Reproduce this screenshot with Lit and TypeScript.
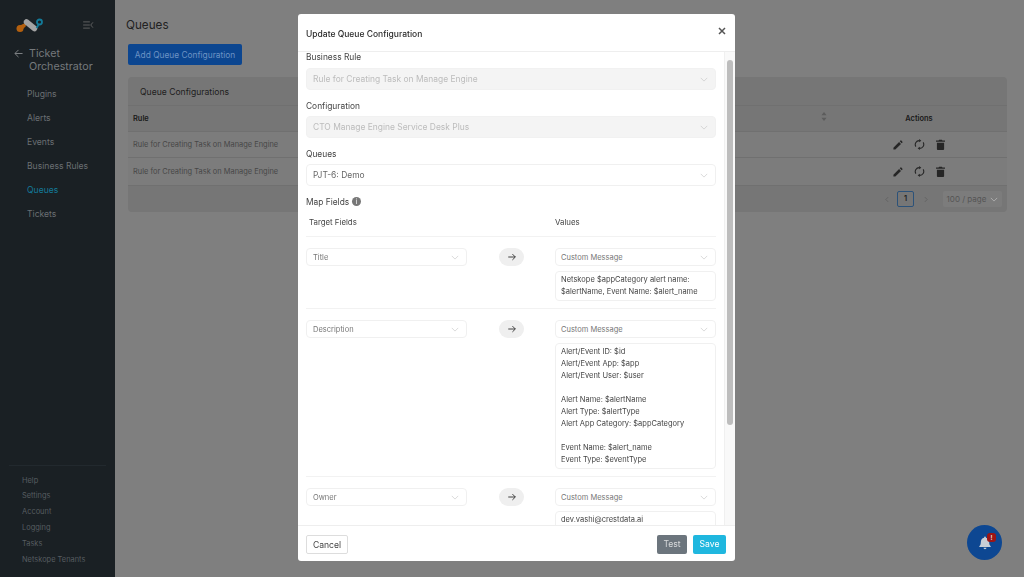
import { LitElement, css, html, svg } from 'lit'
import { customElement } from 'lit/decorators.js'

const chevron = html`<svg class="chev" viewBox="0 0 10 6" width="8" height="5"><path d="M1 1l4 4 4-4" fill="none" stroke="currentColor" stroke-width="0.8"/></svg>`

const pencil = svg`<path d="M.5 11.500V9.200L7.300 2.400l2.300 2.300-6.800 6.800zM8.100 1.600l.9-.9a.7.7 0 0 1 1 0l1.300 1.300a.7.7 0 0 1 0 1l-.9.900z"/>`
const sync = svg`<g fill="none" stroke="currentColor" stroke-width="1.200"><path d="M2 8.300A4.300 4.300 0 0 1 6 1.800"/><path d="M10 3.700A4.300 4.300 0 0 1 6 10.200"/></g><path d="M5.600 0v3.600L8 1.800zM6.400 12V8.400L4 10.200z"/>`
const trash = svg`<path d="M1 4h8v7a1 1 0 0 1-1 1H2a1 1 0 0 1-1-1zM0 1.500h2.800L3.500.6h3l.7.900H10V3H0z"/>`

@customElement('app-root')
export class AppRoot extends LitElement {
  static styles = css`
    :host {
      display: grid;
      grid-template-columns: 115px 1fr;
      height: 100vh;
      overflow: hidden;
      font-family: Inter, 'Liberation Sans', sans-serif;
      background: #7f7f7f;
      color: #333;
    }
    .side {
      background: #1a2024;
      display: flex;
      flex-direction: column;
      color: #6a6f73;
      font-size: 8.600px;
    }
    .brand {
      display: flex;
      align-items: center;
      justify-content: space-between;
      padding: 16px 21px 0 16px;
      height: 17px;
    }
    .back {
      display: flex;
      gap: 6px;
      margin: 14px 0 0 14px;
      font-size: 10.700px;
      line-height: 13px;
      color: #75797c;
    }
    .back svg { margin-top: 2px; }
    .nav { display: flex; flex-direction: column; margin: 9px 0 0 27px; }
    .nav div { height: 24px; line-height: 24px; }
    .nav .on { color: #137a99; }
    .foot {
      margin: auto 9px 9px;
      padding: 7px 0 0 13px;
      border-top: 1px solid #22292e;
      font-size: 7.450px;
      color: #565c60;
      line-height: 15.900px;
    }
    .main { padding: 17px 17px 0 11px; min-width: 0; color: #222; }
    .main h1 { font-size: 11.700px; font-weight: 400; margin: 0; line-height: 16px; }
    .add {
      margin: 11px 0 0 2px;
      width: 114px;
      height: 21px;
      box-sizing: border-box;
      background: #0c4690;
      border-radius: 2px;
      color: #6d93c4;
      font-size: 8.350px;
      line-height: 22px;
      text-align: center;
    }
    .card {
      margin: 12px 0 0 2px;
      height: 135px;
      background: #767676;
      border-radius: 4px;
      font-size: 7.450px;
    }
    .card-head { height: 28px; line-height: 30px; padding-left: 12px; font-size: 8.600px; color: #1d1d1d; }
    .tr {
      display: grid;
      grid-template-columns: 1fr 176px;
      align-items: center;
      padding-left: 5px;
      border-top: 1px solid #707070;
      background: #7c7c7c;
      height: 28px;
      box-sizing: border-box;
      color: #474747;
    }
    .tr.th { background: #767676; height: 26px; color: #191919; font-weight: 600; }
    .th + .tr { height: 26px; }
    .th .act { text-align: center; }
    .sort { position: relative; }
    .sort svg { position: absolute; right: 4px; top: -2px; }
    .icons { display: flex; gap: 11px; align-items: center; padding-left: 62px; color: #262626; }
    .icons svg { fill: currentColor; flex: none; }
    .pager {
      display: flex;
      justify-content: flex-end;
      align-items: center;
      height: 27px;
      box-sizing: border-box;
      padding-right: 5px;
      color: #555;
      border-top: 1px solid #707070;
    }
    .pager > svg { margin: 0 4px 0 3px; flex: none; }
    .pager .page {
      width: 17px;
      height: 16px;
      margin: 0 7px 0 4px;
      box-sizing: border-box;
      border: 1px solid #2c5279;
      border-radius: 2px;
      text-align: center;
      line-height: 14px;
      font-weight: 600;
      color: #222;
    }
    .pager .size {
      margin-left: 11px;
      width: 59px;
      height: 16px;
      box-sizing: border-box;
      background: #7c7c7c;
      border-radius: 2px;
      display: flex;
      align-items: center;
      justify-content: center;
      gap: 4px;
      font-size: 8px;
    }
    .modal {
      position: fixed;
      left: 298px;
      top: 14px;
      width: 437px;
      height: 547px;
      background: #fff;
      border-radius: 3px;
      display: flex;
      flex-direction: column;
      overflow: hidden;
    }
    .modal-head {
      height: 38px;
      flex: none;
      box-sizing: border-box;
      border-bottom: 1px solid #eee;
      display: flex;
      align-items: center;
      justify-content: space-between;
      padding: 3px 9px 0 8px;
      font-size: 8.500px;
      color: #2b2b2b;
      font-weight: 500;
    }
    .modal-head svg { margin-top: -7px; }
    .body {
      flex: 1;
      min-height: 0;
      overflow: hidden;
      padding: 0 19px 0 8px;
      color: #555;
    }
    .label { font-size: 8.400px; line-height: 12px; color: #444; padding-top: 1px; }
    .block { margin-bottom: 9px; }
    .block:first-child { margin-top: -2px; }
    .block > .label { margin: 0 0 4px; }
    .block:first-child > .label { margin-bottom: 5px; }
    .sel {
      display: flex;
      align-items: center;
      justify-content: space-between;
      height: 22px;
      box-sizing: border-box;
      padding: 0 7px 0 6px;
      border: 1px solid #f0f0f0;
      border-radius: 4px;
      background: #fff;
      color: #666;
      font-size: 8.450px;
    }
    .sel.dis { background: #f4f4f4; color: #bcbcbc; border-color: #f1f1f1; }
    .chev { color: #c6c6c6; flex: none; }
    .sel.small { height: 18px; font-size: 7.500px; color: #777; }
    .row > div:last-child .sel { padding-left: 5px; }
    .map-head {
      display: grid;
      grid-template-columns: 246px 1fr;
      padding: 9px 0 9px 3px;
      border-bottom: 1px solid #f2f2f2;
      font-size: 7.850px;
      color: #444;
    }
    .row {
      display: grid;
      grid-template-columns: 161px 88px 161px;
      padding: 11px 0 7px;
      border-bottom: 1px solid #f2f2f2;
      align-items: start;
    }
    .go {
      width: 25px;
      height: 18px;
      margin-left: 32px;
      background: #efefef;
      border-radius: 9px;
      display: flex;
      align-items: center;
      justify-content: center;
    }
    .area {
      margin-top: 5px;
      padding: 2px 5px;
      border: 1px solid #f0f0f0;
      border-radius: 4px;
      font-size: 7.500px;
      line-height: 12px;
      color: #444;
      white-space: pre-wrap;
      box-sizing: border-box;
    }
    .info {
      display: inline-block;
      width: 9px;
      height: 9px;
      border-radius: 50%;
      background: #777;
      color: #fff;
      font-size: 7px;
      line-height: 9px;
      text-align: center;
      margin-left: 3px;
      vertical-align: 1px;
    }
    .track {
      position: absolute;
      right: 0;
      top: 38px;
      bottom: 36px;
      width: 11px;
      background: #f9f9f9;
      border-left: 1px solid #f0f0f0;
      box-sizing: border-box;
    }
    .thumb {
      position: absolute;
      left: 2px;
      top: 8px;
      width: 6px;
      height: 365px;
      border-radius: 3px;
      background: #bdbdbd;
    }
    .modal-foot {
      height: 36px;
      flex: none;
      box-sizing: border-box;
      border-top: 1px solid #eee;
      display: flex;
      align-items: center;
      gap: 6px;
      padding: 1px 9px 0 8px;
      font-size: 8.600px;
    }
    .btn {
      height: 19px;
      line-height: 18px;
      box-sizing: border-box;
      border-radius: 2px;
      text-align: center;
    }
    .cancel { border: 1px solid #ddd; color: #444; width: 42px; margin-right: auto; }
    .test { background: #6c757d; color: #d8dadc; width: 30px; }
    .save { background: #1fb7df; color: #fff; width: 33px; }
    .fab {
      position: fixed;
      left: 967px;
      top: 525px;
      width: 35px;
      height: 35px;
      border-radius: 50%;
      background: #0d4792;
      display: flex;
      align-items: center;
      justify-content: center;
    }
    .badge {
      position: absolute;
      left: 20px;
      top: 8px;
      width: 9px;
      height: 9px;
      border-radius: 3px;
      background: #9c1515;
      color: #ddd;
      font-size: 6px;
      font-weight: 700;
      line-height: 9px;
      text-align: center;
    }
  `

  tableRow() {
    return html`<div class="tr">
      <div>Rule for Creating Task on Manage Engine</div>
      <div class="icons">
        <svg viewBox="0 0 12 12" width="10" height="10">${pencil}</svg>
        <svg viewBox="0 0 12 12" width="11" height="11">${sync}</svg>
        <svg viewBox="0 0 10 12" width="9" height="11">${trash}</svg>
      </div>
    </div>`
  }

  mapRow(field: string, value: string, height: number) {
    return html`<div class="row">
      <div class="sel small"><span>${field}</span>${chevron}</div>
      <div class="go">
        <svg viewBox="0 0 12 12" width="10" height="10"><path d="M1.500 6h8.500M6.500 2.500L10 6l-3.500 3.500" fill="none" stroke="#333" stroke-width="1.100"/></svg>
      </div>
      <div>
        <div class="sel small"><span>Custom Message</span>${chevron}</div>
        <div class="area" style="height:${height}px">${value}</div>
      </div>
    </div>`
  }

  render() {
    return html`
      <aside class="side">
        <div class="brand">
          <svg viewBox="0 0 28 16" width="28" height="16">
            <circle cx="4" cy="11.500" r="3.500" fill="#b4600f"/>
            <path d="M3 9L9 6L10 9L6 13z" fill="#b4600f"/>
            <path d="M10.500 5L18.500 11.500" stroke="#a3a3a3" stroke-width="5.500" stroke-linecap="round"/>
            <path d="M20.500 11L22.500 8" stroke="#137a99" stroke-width="1.800"/>
            <circle cx="23.500" cy="5" r="2.500" fill="none" stroke="#137a99" stroke-width="1.800"/>
          </svg>
          <svg viewBox="0 0 12 9" width="11" height="8"><path d="M0 1h7.500M0 4.500h7.500M0 8h7.500M11 1.500L8.500 4.500 11 7.500" fill="none" stroke="#666" stroke-width="1"/></svg>
        </div>
        <div class="back">
          <svg viewBox="0 0 10 10" width="9" height="9"><path d="M9.500 5H1M5 1L1 5l4 4" fill="none" stroke="#7d8184" stroke-width="1.100"/></svg>
          <span>Ticket<br />Orchestrator</span>
        </div>
        <nav class="nav">
          <div>Plugins</div>
          <div>Alerts</div>
          <div>Events</div>
          <div>Business Rules</div>
          <div class="on">Queues</div>
          <div>Tickets</div>
        </nav>
        <div class="foot">
          <div>Help</div>
          <div>Settings</div>
          <div>Account</div>
          <div>Logging</div>
          <div>Tasks</div>
          <div>Netskope Tenants</div>
        </div>
      </aside>

      <main class="main">
        <h1>Queues</h1>
        <div class="add">Add Queue Configuration</div>
        <section class="card">
          <div class="card-head">Queue Configurations</div>
          <div class="tr th">
            <div class="sort">Rule
              <svg viewBox="0 0 6 9" width="6" height="9"><path d="M3 0l2.500 3.300h-5zM3 9L.500 5.700h5z" fill="#5c5c5c"/></svg>
            </div>
            <div class="act">Actions</div>
          </div>
          ${this.tableRow()}
          ${this.tableRow()}
          <div class="pager">
            <svg viewBox="0 0 5 8" width="4" height="7"><path d="M4 1L1 4l3 3" fill="none" stroke="#5f5f5f"/></svg>
            <span class="page">1</span>
            <svg viewBox="0 0 5 8" width="4" height="7"><path d="M1 1l3 3-3 3" fill="none" stroke="#5f5f5f"/></svg>
            <span class="size">100 / page ${chevron}</span>
          </div>
        </section>
      </main>

      <div class="modal">
        <div class="modal-head">
          <span>Update Queue Configuration</span>
          <svg viewBox="0 0 8 8" width="8" height="8"><path d="M1 1l6 6M7 1L1 7" stroke="#555" stroke-width="1.500"/></svg>
        </div>
        <div class="body">
          <div class="block">
            <div class="label">Business Rule</div>
            <div class="sel dis"><span>Rule for Creating Task on Manage Engine</span>${chevron}</div>
          </div>
          <div class="block">
            <div class="label">Configuration</div>
            <div class="sel dis"><span>CTO Manage Engine Service Desk Plus</span>${chevron}</div>
          </div>
          <div class="block">
            <div class="label">Queues</div>
            <div class="sel"><span>PJT-6: Demo</span>${chevron}</div>
          </div>
          <div class="label">Map Fields<span class="info">i</span></div>
          <div class="map-head"><span>Target Fields</span><span>Values</span></div>
          ${this.mapRow('Title', 'Netskope $appCategory alert name: $alertName, Event Name: $alert_name', 30)}
          ${this.mapRow('Description', `Alert/Event ID: $id
Alert/Event App: $app
Alert/Event User: $user

Alert Name: $alertName
Alert Type: $alertType
Alert App Category: $appCategory

Event Name: $alert_name
Event Type: $eventType`, 126)}
          ${this.mapRow('Owner', 'dev.vashi@crestdata.ai', 30)}
        </div>
        <div class="track"><div class="thumb"></div></div>
        <div class="modal-foot">
          <div class="btn cancel">Cancel</div>
          <div class="btn test">Test</div>
          <div class="btn save">Save</div>
        </div>
      </div>

      <div class="fab">
        <svg viewBox="0 0 16 18" width="14" height="16"><path d="M8 1.500a1 1 0 0 1 1 1v.6c2.500.5 3.800 2.600 3.800 5.100 0 2.300.6 3.500 1.700 4.600v.7H1.500v-.7c1.100-1.100 1.700-2.300 1.700-4.600 0-2.500 1.300-4.600 3.800-5.100v-.6a1 1 0 0 1 1-1zM6.300 14.500h3.400a1.700 1.700 0 0 1-3.400 0z" fill="#c9ced6"/></svg>
        <span class="badge">!</span>
      </div>
    `
  }
}
